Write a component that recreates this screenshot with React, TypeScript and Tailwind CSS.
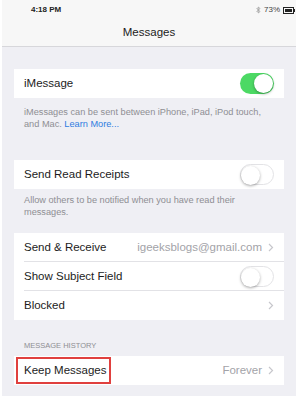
import React from "react";

const font = { fontFamily: '"Liberation Sans", Arial, sans-serif' };

function Toggle({ on }: { on: boolean }) {
  return (
    <div
      className={
        "relative h-[21px] w-[34px] rounded-full " +
        (on ? "bg-[#4cd964]" : "border border-[#e3e3e6] bg-white")
      }
    >
      <div
        className={
          "absolute top-[1px] h-[19px] w-[19px] rounded-full bg-white shadow-[0_1px_3px_rgba(0,0,0,0.35)] " +
          (on ? "right-[1px]" : "left-0 top-0")
        }
      />
    </div>
  );
}

function Chevron() {
  return (
    <svg width="6" height="9" viewBox="0 0 6 9" className="ml-[6px]">
      <path d="M1 1l3.5 3.5L1 8" fill="none" stroke="#c7c7cc" strokeWidth="1.2" />
    </svg>
  );
}

function Bluetooth() {
  return (
    <svg width="5" height="8" viewBox="0 0 5 8">
      <path d="M0.5 2l3.5 3.5L2.2 7V1L4 2.5L0.5 6" fill="none" stroke="#9a9a9a" strokeWidth="0.8" />
    </svg>
  );
}

function Row({ label, value, toggle, chevron, last = true, boxed = false }: {
  label: string;
  value?: string;
  toggle?: boolean;
  chevron?: boolean;
  last?: boolean;
  boxed?: boolean;
}) {
  return (
    <div className="relative flex h-[29px] items-center pl-[10px] pr-[10px]">
      {boxed ? (
        <div className="absolute left-[2px] top-[1px] h-[27px] w-[95px] border-2 border-[#e0403e]" />
      ) : null}
      <span className="text-[11.5px] text-[#1c1c1c]">{label}</span>
      <div className="ml-auto flex items-center">
        {value ? <span className="text-[11.5px] text-[#a3a3a8]">{value}</span> : null}
        {toggle !== undefined ? <Toggle on={toggle} /> : null}
        {chevron ? <Chevron /> : null}
      </div>
      {!last ? <div className="absolute bottom-0 left-[10px] right-0 h-px bg-[#e2e2e6]" /> : null}
    </div>
  );
}

export default function App() {
  return (
    <div className="h-[396px] w-[299px] overflow-hidden bg-white" style={font}>
      <div className="ml-[2px] h-full w-[294px] bg-[#efeff4]">
        <div className="border-b border-[#d7d7db] bg-[#f7f7f7]">
          <div className="flex h-[20px] items-center pl-[29px] pr-[1px] text-[8px] font-bold text-[#222]">
            <span>4:18 PM</span>
            <div className="ml-auto flex items-center gap-[3px] font-normal text-[#444]">
              <Bluetooth />
              <span>73%</span>
              <div className="flex items-center">
                <div className="h-[7px] w-[11px] border border-[#222] p-[1px]">
                  <div className="h-full w-[7px] bg-[#222]" />
                </div>
                <div className="h-[3px] w-[1px] bg-[#222]" />
              </div>
            </div>
          </div>
          <div className="flex h-[26px] items-center justify-center text-[11.5px] text-[#1c1c1c]">Messages</div>
        </div>

        <div className="mx-[12px] mt-[22px] bg-white">
          <Row label="iMessage" toggle={true} />
        </div>
        <p className="pl-[22px] pr-[24px] pt-[8px] text-[9.2px] leading-[12px] text-[#8e8e93]">
          iMessages can be sent between iPhone, iPad, iPod touch, and Mac.{" "}
          <span className="text-[#2f7de1]">Learn More...</span>
        </p>

        <div className="mx-[12px] mt-[30px] bg-white">
          <Row label="Send Read Receipts" toggle={false} />
        </div>
        <p className="pl-[22px] pr-[24px] pt-[5px] text-[9.2px] leading-[12px] text-[#8e8e93]">
          Allow others to be notified when you have read their messages.
        </p>

        <div className="mx-[12px] mt-[15px] bg-white">
          <Row label="Send & Receive" value="igeeksblogs@gmail.com" chevron last={false} />
          <Row label="Show Subject Field" toggle={false} last={false} />
          <Row label="Blocked" chevron />
        </div>

        <div className="px-[22px] pt-[21px] pb-[5px] text-[7.5px] uppercase leading-[10px] text-[#8e8e93]">
          Message History
        </div>
        <div className="mx-[12px] bg-white">
          <Row label="Keep Messages" value="Forever" chevron boxed />
        </div>
      </div>
    </div>
  );
}
